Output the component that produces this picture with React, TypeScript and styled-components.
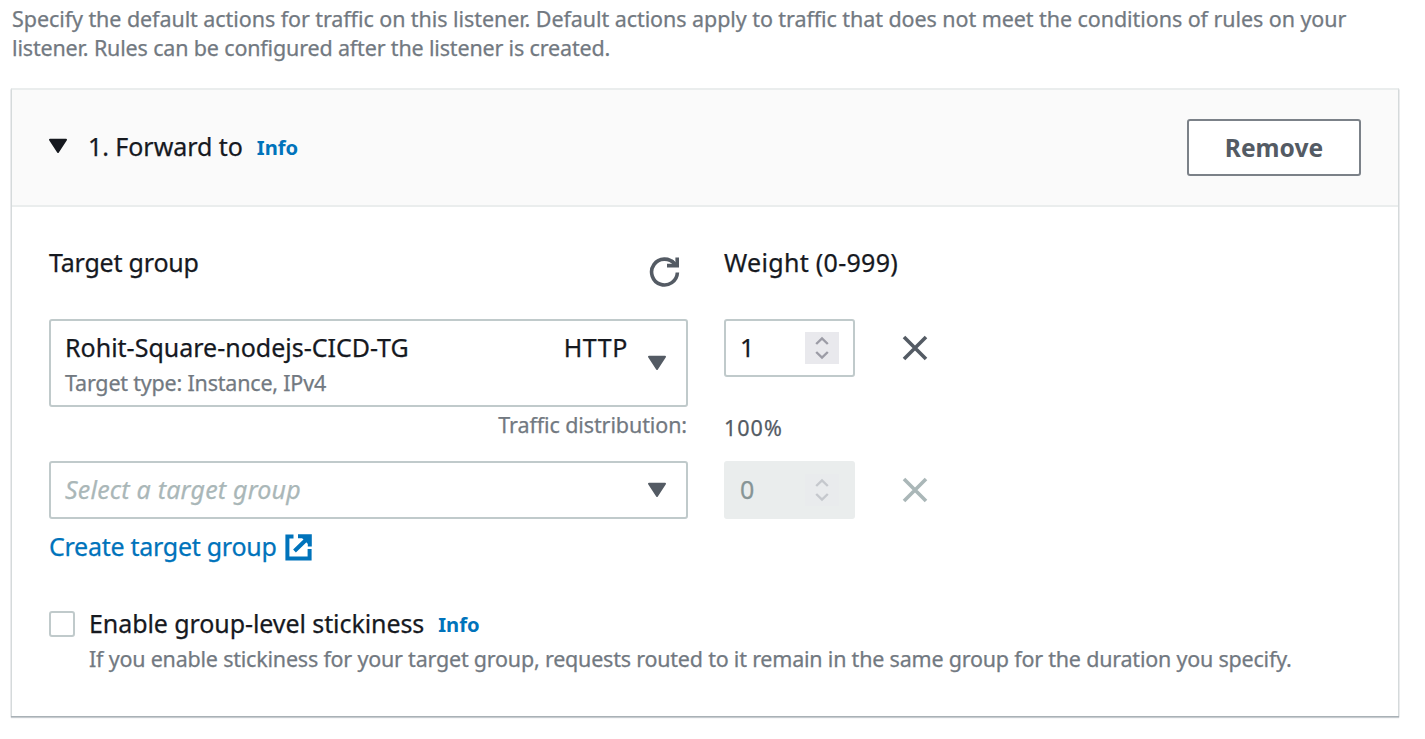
import React from "react";
import styled, { createGlobalStyle } from "styled-components";

const color = {
  ink: "#16191f",
  body: "#545b64",
  muted: "#727981",
  hint: "#aab7b8",
  link: "#0073bb",
  line: "#eaeded",
};

const GlobalStyle = createGlobalStyle`
  * { box-sizing: border-box; }
  body {
    margin: 0;
    background: #fff;
    color: ${color.ink};
    font-family: "Noto Sans", "Open Sans", sans-serif;
    font-size: 25px;
    line-height: 36px;
  }
  svg { display: block; flex: none; }
`;

const Page = styled.main`
  width: 1425px;
  height: 739px;
  padding: 4px 0 0 11px;
  overflow: hidden;
`;

const Text = styled.span<{ $track?: number }>`
  display: block;
  white-space: nowrap;
  letter-spacing: ${(p) => p.$track ?? 0}px;
  -webkit-text-stroke: 0.25px currentColor;
`;

const SmallText = styled(Text)<{ $tone?: string }>`
  font-size: 21.5px;
  color: ${(p) => p.$tone ?? color.muted};
`;

const Intro = styled.div`
  height: 84px;
  padding-left: 1px;
  ${SmallText} { line-height: 29px; }
`;

const Card = styled.section`
  width: 1388px;
  height: 628px;
  border: 1px solid #d5dadb;
  border-top: 2px solid ${color.line};
  border-bottom: 0;
  box-shadow: 0 1px 1px #a9b1b6, 0 2px 1px #ccd1d4;
`;

const CardHeader = styled.header`
  display: flex;
  align-items: center;
  height: 117px;
  padding: 0 37px 0 36px;
  background: #fafafa;
  border-bottom: 2px solid ${color.line};
`;

const HeaderTitle = styled.div`
  display: flex;
  flex: 1;
  align-items: center;
  padding-bottom: 3px;
  svg { margin-right: 20px; }
`;

const InfoLink = styled(Text)`
  margin-left: 14px;
  padding-top: 2px;
  font-size: 20.2px;
  font-weight: 700;
  color: ${color.link};
  -webkit-text-stroke: 0;
`;

const RemoveButton = styled.button`
  width: 174px;
  height: 57px;
  padding: 0;
  border: 2px solid #7b8188;
  border-radius: 3px;
  background: #fff;
  color: ${color.body};
  font: 700 24.6px "Noto Sans", sans-serif;
`;

const Body = styled.div`
  padding: 37px 37px 0;
`;

const Grid = styled.div`
  display: grid;
  grid-template-columns: 639px 131px 30px;
  grid-template-rows: 75px 88px 54px 58px;
  column-gap: 36px;
`;

const LabelCell = styled.div`
  display: flex;
  justify-content: space-between;
  align-items: flex-start;
  svg { margin: 12px 7px 0 0; }
`;

const Select = styled.div`
  display: flex;
  align-items: center;
  padding: 0 19px 0 14px;
  border: 2px solid #c0cacb;
  border-radius: 3px;
`;

const Option = styled.div`
  flex: 1;
  padding-top: 3px;
`;

const OptionLine = styled.div`
  display: flex;
  justify-content: space-between;
  padding-right: 19px;
`;

const Placeholder = styled(Text)`
  flex: 1;
  padding-bottom: 2px;
  font-style: italic;
  color: ${color.hint};
`;

const WeightField = styled.div<{ $disabled?: boolean }>`
  display: flex;
  align-items: center;
  justify-content: space-between;
  height: 58px;
  padding: 0 14px;
  border: 2px solid ${(p) => (p.$disabled ? color.line : "#c0cacb")};
  border-radius: 3px;
  background: ${(p) => (p.$disabled ? color.line : "#fff")};
  color: ${(p) => (p.$disabled ? "#879596" : color.ink)};
  ${Text} { padding-bottom: 2px; }
`;

const Stepper = styled.span<{ $disabled?: boolean }>`
  display: grid;
  place-items: center;
  width: 34px;
  height: 32px;
  background: ${(p) => (p.$disabled ? "#e9ebed" : "#e9e9ed")};
  color: ${(p) => (p.$disabled ? "#c5c8cd" : "#9c9ca6")};
`;

const RemoveCell = styled.div`
  display: flex;
  align-items: center;
  height: 58px;
  padding-left: 11px;
`;

const Distribution = styled.div`
  display: flex;
  justify-content: flex-end;
  padding-right: 1px;
`;

const Percent = styled.div`
  padding-top: 3px;
`;

const CreateLink = styled.a`
  display: flex;
  align-items: center;
  gap: 8px;
  height: 56px;
  color: ${color.link};
  ${Text} { padding-bottom: 2px; }
`;

const Stickiness = styled.div`
  display: flex;
  gap: 14px;
  padding-top: 30px;
`;

const Checkbox = styled.span`
  width: 26px;
  height: 26px;
  margin-top: 6px;
  border: 2px solid #c0cacb;
  border-radius: 3px;
`;

const StickinessTitle = styled.div`
  display: flex;
  align-items: center;
  height: 36px;
`;

const Caret = ({ fill }: { fill: string }) => (
  <svg width="20" height="16" viewBox="0 0 20 16">
    <path d="M2 1.8h16L10 14z" fill={fill} stroke={fill} strokeWidth="2" strokeLinejoin="round" />
  </svg>
);

const RefreshIcon = () => (
  <svg width="32" height="32" viewBox="0 0 32 32" fill="none" stroke={color.body} strokeWidth="3.6">
    <path d="M28.4 16.5A12.9 12.9 0 1 1 25.6 8" />
    <path d="M28.2 1.5V9.6H18" />
    <path d="M22.5 4.5L28 9.5" strokeWidth="3" />
  </svg>
);

const Cross = ({ stroke }: { stroke: string }) => (
  <svg width="26" height="26" viewBox="0 0 26 26">
    <path d="M2 2l22 22M24 2L2 24" stroke={stroke} strokeWidth="3.6" />
  </svg>
);

const StepArrows = () => (
  <svg width="16" height="24" viewBox="0 0 16 24" fill="none" stroke="currentColor" strokeWidth="2.4">
    <path d="M2.2 8L8 2.4 13.8 8M2.2 16L8 21.6 13.8 16" />
  </svg>
);

const ExternalIcon = () => (
  <svg width="27" height="27" viewBox="0 0 27 27" fill="none" stroke={color.link} strokeWidth="4">
    <path d="M8.5 2.4H2.4V24.6H24.6V15" />
    <path d="M13 2.2H24.8V12.5M24.5 2.5L9.5 17" />
    <path d="M16 3H24V11z" fill={color.link} stroke="none" />
  </svg>
);

export default function App() {
  return (
    <>
      <GlobalStyle />
      <Page>
        <Intro>
          <SmallText $track={-0.07}>
            Specify the default actions for traffic on this listener. Default actions apply to traffic that does not meet the conditions of rules on your
          </SmallText>
          <SmallText $track={-0.16}>listener. Rules can be configured after the listener is created.</SmallText>
        </Intro>
        <Card>
          <CardHeader>
            <HeaderTitle>
              <Caret fill={color.ink} />
              <Text $track={-0.05}>1. Forward to</Text>
              <InfoLink>Info</InfoLink>
            </HeaderTitle>
            <RemoveButton>Remove</RemoveButton>
          </CardHeader>
          <Body>
            <Grid>
              <LabelCell>
                <Text $track={-0.2}>Target group</Text>
                <RefreshIcon />
              </LabelCell>
              <Text $track={0.3}>Weight (0-999)</Text>
              <span />

              <Select>
                <Option>
                  <OptionLine>
                    <Text>Rohit-Square-nodejs-CICD-TG</Text>
                    <Text $track={0.6}>HTTP</Text>
                  </OptionLine>
                  <SmallText $track={-0.2}>Target type: Instance, IPv4</SmallText>
                </Option>
                <Caret fill={color.body} />
              </Select>
              <WeightField>
                <Text>1</Text>
                <Stepper><StepArrows /></Stepper>
              </WeightField>
              <RemoveCell><Cross stroke={color.body} /></RemoveCell>

              <Distribution>
                <SmallText $track={-0.1}>Traffic distribution:</SmallText>
              </Distribution>
              <Percent>
                <SmallText $tone={color.body} $track={1}>100%</SmallText>
              </Percent>
              <span />

              <Select>
                <Placeholder $track={0.2}>Select a target group</Placeholder>
                <Caret fill={color.body} />
              </Select>
              <WeightField $disabled>
                <Text>0</Text>
                <Stepper $disabled><StepArrows /></Stepper>
              </WeightField>
              <RemoveCell><Cross stroke={color.hint} /></RemoveCell>
            </Grid>
            <CreateLink>
              <Text $track={-0.27}>Create target group</Text>
              <ExternalIcon />
            </CreateLink>
            <Stickiness>
              <Checkbox />
              <div>
                <StickinessTitle>
                  <Text $track={-0.08}>Enable group-level stickiness</Text>
                  <InfoLink>Info</InfoLink>
                </StickinessTitle>
                <SmallText $track={-0.21}>
                  If you enable stickiness for your target group, requests routed to it remain in the same group for the duration you specify.
                </SmallText>
              </div>
            </Stickiness>
          </Body>
        </Card>
      </Page>
    </>
  );
}
